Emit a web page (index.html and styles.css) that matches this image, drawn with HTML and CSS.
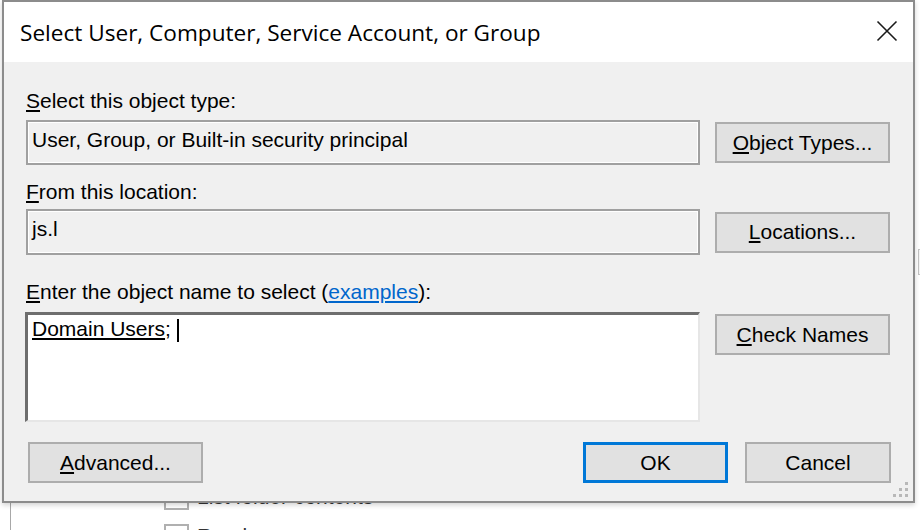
FILE: index.html
```html
<!DOCTYPE html>
<html>
<head>
<meta charset="utf-8">
<link rel="stylesheet" href="styles.css">
</head>
<body>
<div class="desktop">
  <div class="behind">
    <div class="side-box"></div>
    <div class="perm-list">
      <div class="perm-row"><span class="chk"></span><span class="perm-text">List folder contents</span></div>
      <div class="perm-row"><span class="chk"></span><span class="perm-text">Read</span></div>
    </div>
  </div>

  <div class="dialog">
    <div class="titlebar">
      <span class="title">Select User, Computer, Service Account, or Group</span>
      <svg class="close" width="22" height="22" viewBox="0 0 22 22"><path d="M1.5 1.5 L20.5 20.5 M20.5 1.5 L1.5 20.5" stroke="#1a1a1a" stroke-width="1.6" fill="none"/></svg>
    </div>
    <div class="content">
      <div class="label l1"><u>S</u>elect this object type:</div>
      <div class="row r1">
        <div class="field">User, Group, or Built-in security principal</div>
        <div class="btn"><u>O</u>bject Types...</div>
      </div>
      <div class="label l2"><u>F</u>rom this location:</div>
      <div class="row r2">
        <div class="field">js.l</div>
        <div class="btn"><u>L</u>ocations...</div>
      </div>
      <div class="label l3"><u>E</u>nter the object name to select (<span class="link">examples</span>):</div>
      <div class="row r3">
        <div class="edit"><span class="resolved">Domain Users</span>; <span class="caret"></span></div>
        <div class="btn top"><u>C</u>heck Names</div>
      </div>
      <div class="footer">
        <div class="btn adv"><u>A</u>dvanced...</div>
        <div class="btn ok">OK</div>
        <div class="btn cancel">Cancel</div>
      </div>
    </div>
    <svg class="grip" width="15" height="15" viewBox="0 0 15 15">
      <rect x="12" y="0" width="3" height="3" fill="#b8b8b8"/>
      <rect x="6" y="6" width="3" height="3" fill="#b8b8b8"/>
      <rect x="12" y="6" width="3" height="3" fill="#b8b8b8"/>
      <rect x="0" y="12" width="3" height="3" fill="#b8b8b8"/>
      <rect x="6" y="12" width="3" height="3" fill="#b8b8b8"/>
      <rect x="12" y="12" width="3" height="3" fill="#b8b8b8"/>
    </svg>
  </div>
</div>
</body>
</html>
```

FILE: styles.css
```css
html, body {
  margin: 0;
  padding: 0;
  background: #ffffff;
}

.desktop {
  position: relative;
  width: 920px;
  height: 530px;
  overflow: hidden;
  font-family: "Liberation Sans", Arial, sans-serif;
  font-size: 21px;
  line-height: 24px;
  color: #000;
}

/* window behind the dialog */
.behind {
  position: relative;
  height: 530px;
  margin-left: 10px;
  border-left: 1px solid #a8a8a8;
}

.side-box {
  position: absolute;
  left: 907px;
  top: 249px;
  width: 10px;
  height: 24px;
  border: 1px solid #c4c4c4;
  background: #f4f4f4;
}

.perm-list {
  padding: 485px 0 0 153px;
  display: flex;
  flex-direction: column;
  gap: 15px;
}

.perm-row {
  display: flex;
  align-items: center;
  gap: 8px;
  height: 24px;
}

.chk {
  width: 21px;
  height: 21px;
  border: 2px solid #b0b0b0;
  background: #fff;
  flex: none;
}

.perm-text {
  color: #333;
}

/* dialog window */
.dialog {
  position: absolute;
  left: 2px;
  top: 0;
  width: 913px;
  height: 503px;
  box-sizing: border-box;
  border: 2px solid #8c8c8c;
  background: #f0f0f0;
  box-shadow: 0 2px 5px rgba(0, 0, 0, 0.18);
  display: flex;
  flex-direction: column;
}

.titlebar {
  height: 60px;
  box-sizing: border-box;
  background: #ffffff;
  display: flex;
  align-items: flex-start;
  justify-content: space-between;
  padding: 17px 15px 0 16px;
}

.title {
  font-family: "Open Sans", "Noto Sans", sans-serif;
  font-size: 22.6px;
  line-height: 28px;
  color: #000;
}

.close {
  display: block;
  margin-top: 1px;
}

.content {
  display: flex;
  flex-direction: column;
  padding: 27px 23px 0 22px;
}

.label {
  height: 24px;
  white-space: nowrap;
}

.l2 { margin-top: 15px; }
.l3 { margin-top: 25px; }

.link {
  color: #0066cc;
  text-decoration: underline;
}

.row {
  display: grid;
  grid-template-columns: 674px 175px;
  column-gap: 15px;
  align-items: center;
}

.r1 { margin-top: 7px; height: 45px; }
.r2 { margin-top: 5px; height: 46px; }
.r3 { margin-top: 8px; height: 110px; align-items: start; }

.field {
  height: 100%;
  box-sizing: border-box;
  border: 2px solid #a0a0a0;
  box-shadow: inset 0 0 0 1px #ffffff;
  background: #f0f0f0;
  padding: 6px 4px 0 4px;
  white-space: nowrap;
}

.edit {
  height: 110px;
  box-sizing: border-box;
  background: #ffffff;
  border-style: solid;
  border-width: 3px 2px 2px 3px;
  border-color: #6e6e6e #e6e6e6 #e6e6e6 #6e6e6e;
  padding: 2px 4px 0 4px;
  margin-left: -1px;
  white-space: nowrap;
}

.resolved {
  text-decoration: underline;
  text-underline-offset: 2px;
}

.caret {
  display: inline-block;
  width: 2px;
  height: 23px;
  background: #000;
  vertical-align: -6px;
}

.btn {
  height: 41px;
  box-sizing: border-box;
  background: #e1e1e1;
  border: 2px solid #adadad;
  display: flex;
  align-items: center;
  justify-content: center;
  white-space: nowrap;
}

.btn.top { margin-top: 2px; }

.footer {
  display: flex;
  margin-top: 20px;
  margin-right: -1px;
}

.adv {
  width: 175px;
  margin-left: 2px;
}

.ok {
  width: 145px;
  margin-left: auto;
  border: 3px solid #0078d7;
}

.cancel {
  width: 146px;
  margin-left: 17px;
}

.grip {
  position: absolute;
  right: 5px;
  bottom: 4px;
}
```
